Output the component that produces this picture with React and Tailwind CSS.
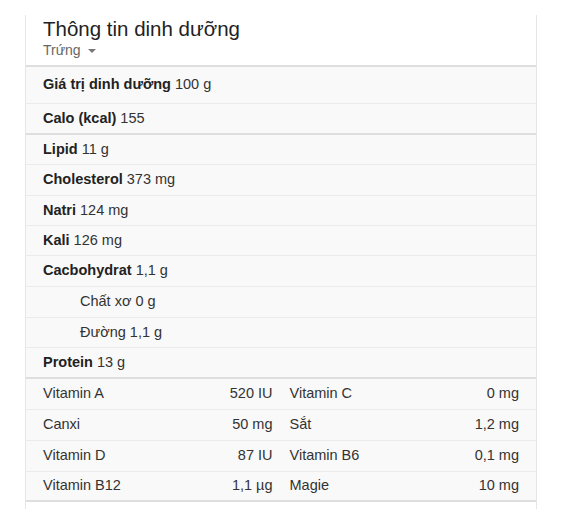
import { useState } from 'react';

const mainRows = [
  { label: 'Lipid', value: '11 g', h: 'h-[30px]' },
  { label: 'Cholesterol', value: '373 mg', h: 'h-[31px]' },
  { label: 'Natri', value: '124 mg', h: 'h-[30px]' },
  { label: 'Kali', value: '126 mg', h: 'h-[30px]' },
  { label: 'Cacbohydrat', value: '1,1 g', h: 'h-[31px]' },
  { label: 'Chất xơ', value: '0 g', h: 'h-[31px]', sub: true },
  { label: 'Đường', value: '1,1 g', h: 'h-[30px]', sub: true },
];

const vitamins = [
  [['Vitamin A', '520 IU'], ['Vitamin C', '0 mg'], 'h-[31px]'],
  [['Canxi', '50 mg'], ['Sắt', '1,2 mg'], 'h-[31px]'],
  [['Vitamin D', '87 IU'], ['Vitamin B6', '0,1 mg'], 'h-[31px]'],
  [['Vitamin B12', '1,1 µg'], ['Magie', '10 mg'], 'h-[30px]'],
];

const NutritionCard = () => {
  const [food] = useState('Trứng');

  return (
    <div className="min-h-[509px] bg-white pl-[25px] pt-[15px] font-['Liberation_Sans',Arial,sans-serif] text-[#222]">
      <div className="w-[512px] min-h-[494px] border-x border-[#e6e6e6]">
        {/* Header */}
        <div className="h-[52px] border-b-2 border-[#dedede] pl-[17px] pt-[1px]">
          <h1 className="text-[20.5px] leading-[26px] text-[#222]">Thông tin dinh dưỡng</h1>
          <div className="flex items-center text-[14px] leading-[16px] text-[#666]">
            <span>{food}</span>
            <span className="ml-[7px] mt-[1px] border-x-[4px] border-t-[4px] border-x-transparent border-t-[#777]" />
          </div>
        </div>

        <div className="bg-[#f9f9f9] text-[14.5px]">
          <div className="flex h-[37px] items-center border-b border-[#ebebeb] px-[17px]">
            <span className="font-bold">Giá trị dinh dưỡng</span>
            <span className="ml-[4px] text-[#333]">100 g</span>
          </div>
          <div className="flex h-[31px] items-center border-b-2 border-[#dedede] px-[17px]">
            <span className="font-bold">Calo (kcal)</span>
            <span className="ml-[4px] text-[#333]">155</span>
          </div>

          {mainRows.map((r, i) => (
            <div key={i} className={`flex items-center border-b border-[#ebebeb] ${r.h} ${r.sub ? 'pl-[54px]' : 'px-[17px]'}`}>
              {r.sub ? (
                <span className="text-[#333]">{r.label} {r.value}</span>
              ) : (
                <>
                  <span className="font-bold">{r.label}</span>
                  <span className="ml-[4px] text-[#333]">{r.value}</span>
                </>
              )}
            </div>
          ))}
          <div className="flex h-[31px] items-center border-b-2 border-[#dedede] px-[17px]">
            <span className="font-bold">Protein</span>
            <span className="ml-[4px] text-[#333]">13 g</span>
          </div>

          {/* Vitamins */}
          {vitamins.map((row, i) => (
            <div
              key={i}
              className={`flex items-center gap-[17px] px-[17px] text-[#333] ${row[2]} ${i === vitamins.length - 1 ? 'border-b-2 border-[#dedede]' : 'border-b border-[#ebebeb]'}`}
            >
              {[row[0], row[1]].map((cell, j) => (
                <div key={j} className="flex flex-1 justify-between">
                  <span>{cell[0]}</span>
                  <span>{cell[1]}</span>
                </div>
              ))}
            </div>
          ))}
        </div>
      </div>
    </div>
  );
};

export default NutritionCard;
